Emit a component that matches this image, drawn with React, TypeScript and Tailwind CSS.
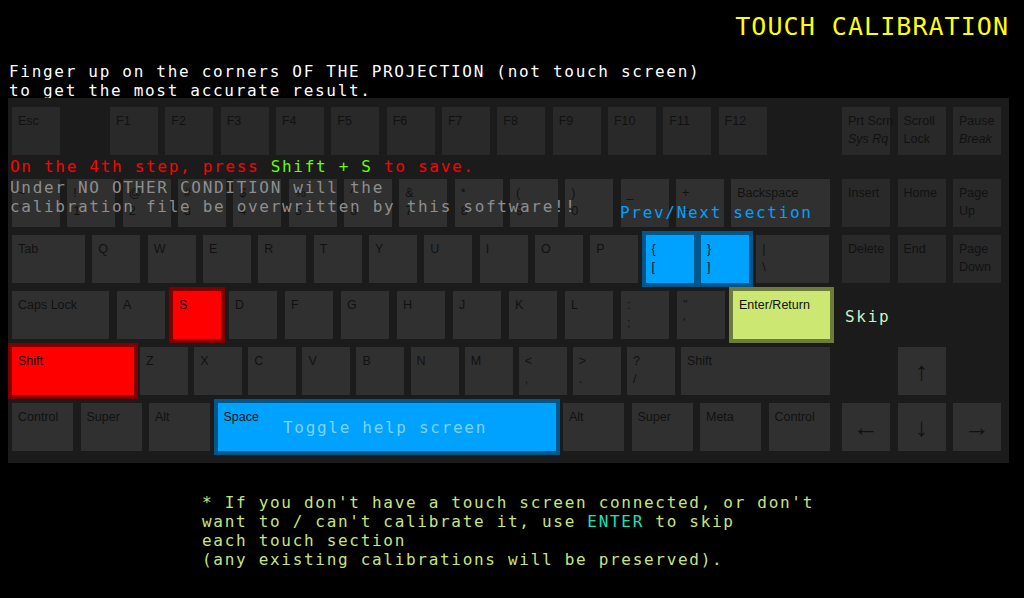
import React from 'react';

type Variant = 'fn' | 'main' | 'red' | 'blue' | 'green';

const variantClass: Record<Variant, string> = {
  fn: 'bg-[#292929]',
  main: 'bg-[#303030]',
  red: 'bg-[#ff0000] ring-4 ring-[#800000]',
  blue: 'bg-[#00a2ff] ring-4 ring-[#00578c]',
  green: 'bg-[#cde872] ring-4 ring-[#6d7c3a]',
};

type KeyProps = { a?: string; b?: string; it?: boolean; v?: Variant; w?: string; arrow?: string };

function Key({ a, b, it, v = 'main', w = 'w-12', arrow }: KeyProps) {
  if (arrow) {
    return (
      <div className={`${w} h-12 shrink-0 ${variantClass[v]} flex items-center justify-center text-[#111] font-['Liberation_Sans',Arial,sans-serif]`}>
        <span className="text-[26px] leading-none">{arrow}</span>
      </div>
    );
  }
  return (
    <div className={`${w} h-12 shrink-0 ${variantClass[v]} pt-[6px] pl-[6px] text-[#111] font-['Liberation_Sans',Arial,sans-serif] text-[12.5px] leading-[17.5px]`}>
      <div className="whitespace-nowrap">{a}</div>
      {b && <div className={`whitespace-nowrap ${it ? 'italic' : ''}`}>{b}</div>}
    </div>
  );
}

const pairs = (labels: (string | [string, string])[], v: Variant = 'main') =>
  labels.map((l, i) =>
    Array.isArray(l) ? <Key key={i} a={l[0]} b={l[1]} v={v} /> : <Key key={i} a={l} v={v} />
  );

function Nav({ children }: { children?: React.ReactNode }) {
  return <div className="ml-[12px] flex gap-[7.5px] w-[159px]">{children}</div>;
}

function Main({ children, gap }: { children: React.ReactNode; gap: string }) {
  return <div className={`flex w-[818px] ${gap}`}>{children}</div>;
}

const mono = "font-['DejaVu_Sans_Mono','Liberation_Mono',monospace] text-[16px] leading-[19px] tracking-[1.7px] whitespace-pre";

export default function App() {
  return (
    <div className="w-[1024px] h-[598px] bg-black overflow-hidden">
      <div className="pt-[12px] pr-[15px] text-right font-['DejaVu_Sans_Mono','Liberation_Mono',monospace] text-[25px] leading-[30px] tracking-[1.05px] text-[#ffff00]">
        TOUCH CALIBRATION
      </div>
      <div className={`mt-[20px] h-[36px] pl-[9px] text-white ${mono}`}>
        {'Finger up on the corners OF THE PROJECTION (not touch screen)\nto get the most accurate result.'}
      </div>

      <div className="relative ml-[8px] w-[1001px] h-[365px] bg-[#1b1b1b] pt-[9px] pl-[4px] flex flex-col gap-[8px]">
        {/* Function row */}
        <div className="flex">
          <Main gap="">
            <Key a="Esc" v="fn" />
            <div className="ml-[50px] flex gap-[7.33px]">
              {pairs(['F1', 'F2', 'F3', 'F4', 'F5', 'F6', 'F7', 'F8', 'F9', 'F10', 'F11', 'F12'], 'fn')}
            </div>
          </Main>
          <Nav>
            <Key a="Prt Scrn" b="Sys Rq" it v="fn" />
            <Key a="Scroll" b="Lock" v="fn" />
            <Key a="Pause" b="Break" it v="fn" />
          </Nav>
        </div>

        {/* Number row */}
        <div className="flex mt-[16px]">
          <Main gap="gap-[7.33px]">
            {pairs([
              ['~', '`'], ['!', '1'], ['@', '2'], ['#', '3'], ['$', '4'], ['%', '5'], ['^', '6'],
              ['&', '7'], ['*', '8'], ['(', '9'], [')', '0'], ['_', '-'], ['+', '='],
            ])}
            <Key a="Backspace" w="w-[99px]" />
          </Main>
          <Nav>
            <Key a="Insert" v="fn" />
            <Key a="Home" v="fn" />
            <Key a="Page" b="Up" v="fn" />
          </Nav>
        </div>

        {/* QWERTY row */}
        <div className="flex">
          <Main gap="gap-[7.33px]">
            <Key a="Tab" w="w-[73px]" />
            {pairs(['Q', 'W', 'E', 'R', 'T', 'Y', 'U', 'I', 'O', 'P'])}
            <Key a="{" b="[" v="blue" />
            <Key a="}" b="]" v="blue" />
            <Key a="|" b="\" w="w-[73px]" />
          </Main>
          <Nav>
            <Key a="Delete" v="fn" />
            <Key a="End" v="fn" />
            <Key a="Page" b="Down" v="fn" />
          </Nav>
        </div>

        {/* Home row */}
        <div className="flex">
          <Main gap="gap-[8px]">
            <Key a="Caps Lock" w="w-[97px]" />
            <Key a="A" />
            <Key a="S" v="red" />
            {pairs(['D', 'F', 'G', 'H', 'J', 'K', 'L', [':', ';'], ['"', "'"]])}
            <Key a="Enter/Return" w="w-[97px]" v="green" />
          </Main>
          <Nav />
        </div>

        {/* Shift row */}
        <div className="flex">
          <Main gap="gap-[6.1px]">
            <Key a="Shift" w="w-[122px]" v="red" />
            {pairs(['Z', 'X', 'C', 'V', 'B', 'N', 'M', ['<', ','], ['>', '.'], ['?', '/']])}
            <Key a="Shift" w="w-[149px]" />
          </Main>
          <Nav>
            <div className="w-12 shrink-0" />
            <Key arrow="↑" />
          </Nav>
        </div>

        {/* Bottom row */}
        <div className="flex">
          <Main gap="gap-[7.5px]">
            <Key a="Control" w="w-[61px]" />
            <Key a="Super" w="w-[61px]" />
            <Key a="Alt" w="w-[61px]" />
            <Key a="Space" w="w-[338px]" v="blue" />
            <Key a="Alt" w="w-[61px]" />
            <Key a="Super" w="w-[61px]" />
            <Key a="Meta" w="w-[61px]" />
            <Key a="Control" w="w-[61px]" />
          </Main>
          <Nav>
            <Key arrow="←" />
            <Key arrow="↓" />
            <Key arrow="→" />
          </Nav>
        </div>

        {/* Overlay messages */}
        <div className={`absolute left-[2px] top-[59px] text-[#ff0000] ${mono}`}>
          On the 4th step, press <span className="text-[#64ff00]">Shift + S</span> to save.
        </div>
        <div className={`absolute left-[2px] top-[80px] text-[#8e8e8e] ${mono}`}>
          {'Under NO OTHER CONDITION will the\ncalibration file be overwritten by this software!!'}
        </div>
        <div className={`absolute left-[612px] top-[105px] text-[#00a0ff] ${mono}`}>Prev/Next section</div>
        <div className={`absolute left-[837px] top-[209px] text-[#c9f3c4] ${mono}`}>Skip</div>
        <div className={`absolute left-[275px] top-[320px] text-[#7fd3ff] ${mono}`}>Toggle help screen</div>
      </div>

      <div className={`mt-[30px] ml-[202px] text-[#c8e57a] ${mono}`}>
        {"* If you don't have a touch screen connected, or don't\nwant to / can't calibrate it, use "}
        <span className="text-[#19e3b5]">ENTER</span>
        {' to skip\neach touch section\n(any existing calibrations will be preserved).'}
      </div>
    </div>
  );
}
